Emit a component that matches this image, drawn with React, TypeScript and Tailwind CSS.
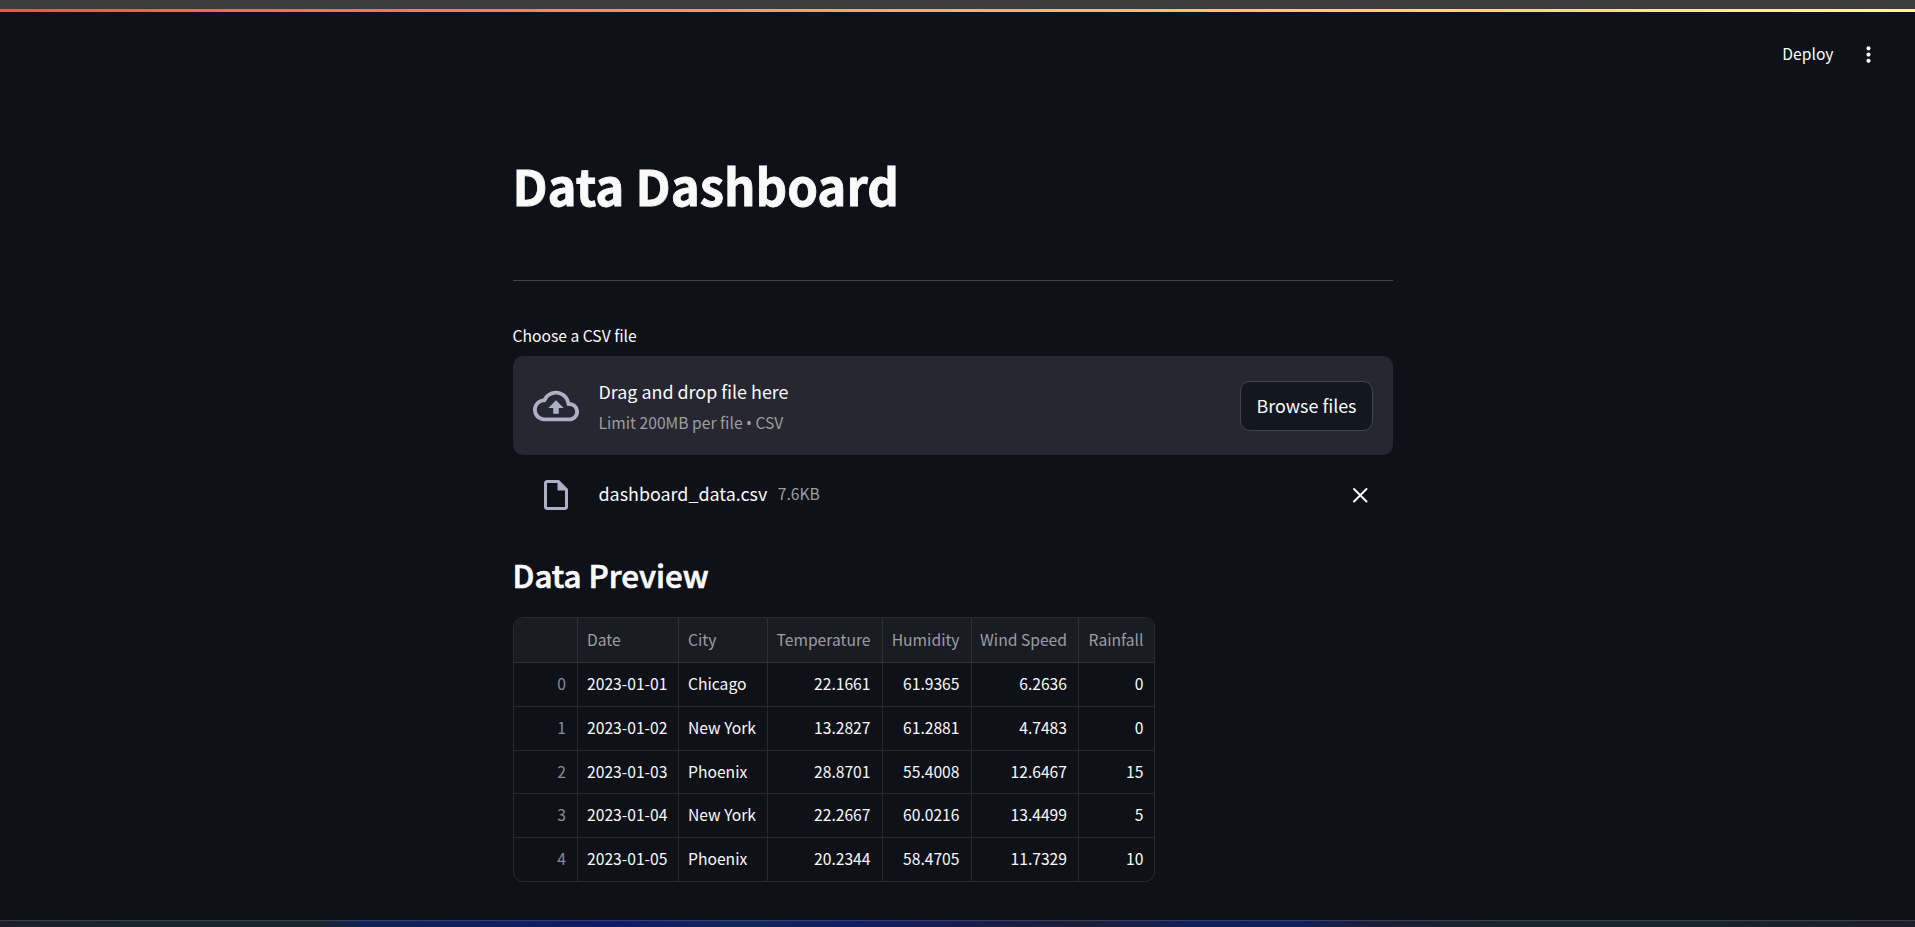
const columns = [
  { label: "", width: "w-[64px]", align: "text-right pr-[11px]" },
  { label: "Date", width: "w-[101px]", align: "text-left pl-[9px]" },
  { label: "City", width: "w-[89px]", align: "text-left pl-[9px]" },
  { label: "Temperature", width: "w-[115px]", align: "text-right pr-[11.5px]" },
  { label: "Humidity", width: "w-[89px]", align: "text-right pr-[11.5px]" },
  { label: "Wind Speed", width: "w-[107px]", align: "text-right pr-[11px]" },
  { label: "Rainfall", width: "w-[76px]", align: "text-right pr-[11.5px]" },
];

const rows = [
  ["0", "2023-01-01", "Chicago", "22.1661", "61.9365", "6.2636", "0"],
  ["1", "2023-01-02", "New York", "13.2827", "61.2881", "4.7483", "0"],
  ["2", "2023-01-03", "Phoenix", "28.8701", "55.4008", "12.6467", "15"],
  ["3", "2023-01-04", "New York", "22.2667", "60.0216", "13.4499", "5"],
  ["4", "2023-01-05", "Phoenix", "20.2344", "58.4705", "11.7329", "10"],
];

function Header() {
  return (
    <header className="flex h-[84px] items-center justify-end pr-[34px]">
      <button className="text-[15.67px] leading-[24px]">Deploy</button>
      <svg className="ml-[22.5px]" width="25" height="25" viewBox="0 0 24 24" fill="#fafafa">
        <path d="M12 8c1.1 0 2-.9 2-2s-.9-2-2-2-2 .9-2 2 .9 2 2 2zm0 2c-1.1 0-2 .9-2 2s.9 2 2 2 2-.9 2-2-.9-2-2-2zm0 6c-1.1 0-2 .9-2 2s.9 2 2 2 2-.9 2-2-.9-2-2-2z" />
      </svg>
    </header>
  );
}

function Uploader() {
  return (
    <section>
      <p className="-ml-[0.5px] text-[15.67px] leading-[24px]">Choose a CSV file</p>
      <div className="mt-[8px] flex h-[99px] items-center rounded-[10px] bg-[#262730] px-[20px]">
        <svg width="46" height="46" viewBox="0 0 24 24" fill="#abb0c4">
          <path d="M19.35 10.04C18.67 6.59 15.64 4 12 4 9.11 4 6.6 5.64 5.35 8.04 2.34 8.36 0 10.91 0 14c0 3.31 2.69 6 6 6h13c2.76 0 5-2.24 5-5 0-2.64-2.05-4.78-4.65-4.96zM19 18H6c-2.21 0-4-1.79-4-4 0-2.05 1.53-3.76 3.56-3.97l1.07-.11.5-.95C8.08 7.14 9.94 6 12 6c2.62 0 4.88 1.86 5.39 4.43l.3 1.5 1.53.11c1.56.1 2.78 1.41 2.78 2.96 0 1.65-1.35 3-3 3zM8 13h2.55v3h2.9v-3H16l-4-4z" />
        </svg>
        <div className="ml-[19.5px] flex flex-1 flex-col pt-[3px]">
          <span className="text-[17.9px] leading-[31px]">Drag and drop file here</span>
          <span className="text-[15.67px] leading-[32px] text-[#9c9da1]">
            Limit 200MB per file <span className="font-['Noto_Sans',sans-serif] leading-none">•</span> CSV
          </span>
        </div>
        <button className="h-[50px] w-[133px] rounded-[10px] border border-[#41444c] bg-[#131720] pb-[2px] text-[17.9px] leading-[46px]">
          Browse files
        </button>
      </div>
      <div className="mt-[20px] flex h-[40px] items-center pl-[25px] pr-[23px]">
        <svg width="36" height="36" viewBox="0 0 24 24" fill="#abb0c4">
          <path d="M14 2H6c-1.1 0-1.99.9-1.99 2L4 20c0 1.1.89 2 1.99 2H18c1.1 0 2-.9 2-2V8l-6-6zM6 20V4h7v5h5v11H6z" />
        </svg>
        <span className="mb-[5px] ml-[24.5px] text-[17.9px] leading-[32px]">dashboard_data.csv</span>
        <span className="mb-[2px] ml-[10.5px] flex-1 text-[15.67px] leading-[28px] text-[#9c9da1]">7.6KB</span>
        <svg width="20" height="20" viewBox="0 0 20 20" stroke="#fafafa" strokeWidth="2" strokeLinecap="round">
          <path d="M4 4 16.5 16.5M16.5 4 4 16.5" />
        </svg>
      </div>
    </section>
  );
}

function PreviewTable() {
  return (
    <div className="w-[642px] overflow-hidden rounded-[10px] border border-[#282a30] text-[15.67px]">
      <div className="flex h-[45px] border-b border-[#2e3037] bg-[#1a1c24] leading-[43px] text-[#9c9da1]">
        {columns.map((column, i) => (
          <div
            key={i}
            className={`${column.width} ${column.align} shrink-0 border-r border-[#2e3037] last:border-r-0`}
          >
            {column.label}
          </div>
        ))}
      </div>
      {rows.map((row) => (
        <div
          key={row[0]}
          className="flex h-[43.75px] border-b border-[#26282e] leading-[41px] last:h-[43px] last:border-b-0"
        >
          {row.map((cell, i) => (
            <div
              key={i}
              className={`${columns[i].width} ${columns[i].align} shrink-0 border-r border-[#26282e] last:border-r-0 first:text-[#8b8c91]`}
            >
              {cell}
            </div>
          ))}
        </div>
      ))}
    </div>
  );
}

export default function App() {
  return (
    <div className="flex h-[927px] w-[1915px] flex-col overflow-hidden bg-[#0e1117] font-['Noto_Sans_CJK_SC','Noto_Sans',sans-serif] text-[#fafafa]">
      <div className="h-[9px] shrink-0 bg-[#3c3c3c]" />
      <div className="h-[3px] shrink-0 bg-linear-to-r from-[#ff4b4b] to-[#fffd80]" />
      <Header />
      <main className="ml-[513px] w-[880px] flex-1">
        <h1 className="mt-[56px] -ml-[0.5px] text-[49.2px] leading-[66px] font-bold [-webkit-text-stroke:0.8px_#fafafa]">
          Data Dashboard
        </h1>
        <hr className="mt-[62px] border-[#41444b]" />
        <div className="mt-[43px]">
          <Uploader />
        </div>
        <h2 className="mt-[39px] mb-[21px] -ml-[0.5px] text-[31.3px] leading-[42px] font-medium [-webkit-text-stroke:0.7px_#fafafa]">
          Data Preview
        </h2>
        <PreviewTable />
      </main>
      <div className="h-[7px] shrink-0 bg-[linear-gradient(90deg,#1c1f2b_0px,#19242e_120px,#19242e_320px,#102554_360px,#0f1f5f_500px,#101b66_620px,#12285a_740px,#101e62_850px,#181d4c_970px,#1c1f36_1080px,#10205a_1200px,#10225a_1300px,#1c1e38_1370px,#19242c_1500px,#19242c_1700px,#1d1e2a_1915px)]">
        <div className="h-px bg-white/15" />
      </div>
    </div>
  );
}
